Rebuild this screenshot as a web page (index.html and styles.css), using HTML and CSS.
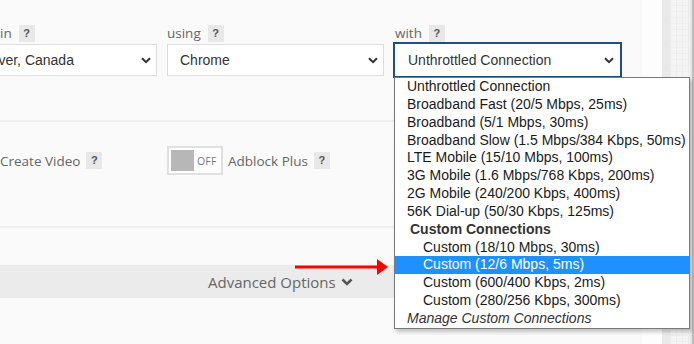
FILE: index.html
```html
<!DOCTYPE html>
<html>
<head>
<meta charset="utf-8">
<link rel="stylesheet" href="styles.css">
</head>
<body>
<div class="page">
  <div class="panel">
    <section class="sec sec-top">
      <div class="field">
        <div class="label label-first">in <span class="q">?</span></div>
        <div class="select"><span>Vancouver, Canada</span><svg class="chev" width="10" height="7" viewBox="0 0 10 7"><path d="M1 1.2 L5 5.2 L9 1.2" fill="none" stroke="#333" stroke-width="2"/></svg></div>
      </div>
      <div class="field">
        <div class="label">using <span class="q">?</span></div>
        <div class="select"><span>Chrome</span><svg class="chev" width="10" height="7" viewBox="0 0 10 7"><path d="M1 1.2 L5 5.2 L9 1.2" fill="none" stroke="#333" stroke-width="2"/></svg></div>
      </div>
      <div class="field">
        <div class="label">with <span class="q">?</span></div>
        <div class="select focused"><span>Unthrottled Connection</span><svg class="chev" width="10" height="7" viewBox="0 0 10 7"><path d="M1 1.2 L5 5.2 L9 1.2" fill="none" stroke="#333" stroke-width="2"/></svg></div>
      </div>
    </section>
    <section class="sec sec-mid">
      <div class="opt">
        <div class="toggle"><span class="knob"></span><span class="off">OFF</span></div>
        <span class="opt-label">Create Video</span><span class="q">?</span>
      </div>
      <div class="opt">
        <div class="toggle"><span class="knob"></span><span class="off">OFF</span></div>
        <span class="opt-label">Adblock Plus</span><span class="q">?</span>
      </div>
    </section>
    <section class="sec sec-bottom">
      <div class="adv">Advanced Options <svg class="adv-chev" width="12" height="8" viewBox="0 0 12 8"><path d="M1.5 1.5 L6 6 L10.5 1.5" fill="none" stroke="#555" stroke-width="2.6"/></svg></div>
    </section>
  </div>
  <div class="strip">
    <div class="s-white"></div>
    <div class="s-gray"></div>
    <div class="s-tiles"></div>
    <div class="s-light"></div>
    <div class="s-dark"></div>
  </div>

  <ul class="dropdown">
    <li>Unthrottled Connection</li>
    <li>Broadband Fast (20/5 Mbps, 25ms)</li>
    <li>Broadband (5/1 Mbps, 30ms)</li>
    <li>Broadband Slow (1.5 Mbps/384 Kbps, 50ms)</li>
    <li>LTE Mobile (15/10 Mbps, 100ms)</li>
    <li>3G Mobile (1.6 Mbps/768 Kbps, 200ms)</li>
    <li>2G Mobile (240/200 Kbps, 400ms)</li>
    <li>56K Dial-up (50/30 Kbps, 125ms)</li>
    <li class="group">Custom Connections</li>
    <li class="sub">Custom (18/10 Mbps, 30ms)</li>
    <li class="sub hl">Custom (12/6 Mbps, 5ms)</li>
    <li class="sub">Custom (600/400 Kbps, 2ms)</li>
    <li class="sub">Custom (280/256 Kbps, 300ms)</li>
    <li class="manage">Manage Custom Connections</li>
  </ul>

  <svg class="arrow" width="94" height="16" viewBox="0 0 94 16">
    <rect x="0" y="6.5" width="84" height="3" fill="#ff0000"/>
    <path d="M82 0 L93 8 L82 16 Z" fill="#ff0000"/>
  </svg>
</div>
</body>
</html>
```

FILE: styles.css
```css
html, body {
  margin: 0;
  padding: 0;
  width: 694px;
  height: 344px;
  overflow: hidden;
  background: #fafafa;
}

.page {
  position: relative;
  display: flex;
  width: 694px;
  height: 344px;
}

.panel {
  flex: none;
  width: 703px;
  margin-left: -61px;
  background: #fafafa;
  display: flex;
  flex-direction: column;
  font-family: "Open Sans", "Liberation Sans", sans-serif;
  color: #666;
}

.sec-top {
  height: 122px;
  box-sizing: border-box;
  padding-top: 24px;
  display: grid;
  grid-template-columns: 218px 217px 226px;
  grid-template-rows: max-content;
  column-gap: 10px;
  border-bottom: 2px solid #efefef;
}

.sec-top .field:nth-child(3) {
  margin-left: 1px;
}

.label {
  height: 18px;
  display: flex;
  align-items: center;
  font-size: 13.5px;
  line-height: 18px;
  margin-bottom: 2px;
  color: #666;
}

.label-first {
  padding-left: 61px;
}

.q {
  display: inline-flex;
  align-items: center;
  justify-content: center;
  width: 16px;
  height: 17px;
  margin-left: 7px;
  background: #e8e8e8;
  color: #555;
  font-family: "Liberation Sans", Arial, sans-serif;
  font-weight: bold;
  font-size: 11px;
  line-height: 17px;
}

.select {
  height: 32px;
  box-sizing: border-box;
  border: 1px solid #dcdcdc;
  background: #fff;
  display: flex;
  align-items: center;
  justify-content: space-between;
  padding: 0 5px 0 12px;
  font-family: "Liberation Sans", Arial, sans-serif;
  font-size: 14px;
  color: #333;
  white-space: nowrap;
}

.select.focused {
  border-color: #fff;
  outline: 2px solid #1f4f7b;
  outline-offset: 0;
}

.chev {
  flex: none;
  display: block;
  margin-top: 1px;
}

.sec-mid {
  height: 106px;
  box-sizing: border-box;
  padding-top: 24px;
  display: flex;
  border-bottom: 2px solid #efefef;
}

.opt {
  width: 228px;
  display: flex;
  align-items: center;
  height: 29px;
  font-size: 13.5px;
  color: #666;
}

.toggle {
  flex: none;
  width: 56px;
  height: 29px;
  box-sizing: border-box;
  border: 2px solid #e0e0e0;
  background: #fff;
  padding: 2px;
  display: flex;
  align-items: center;
  margin-right: 5px;
}

.knob {
  width: 23px;
  height: 21px;
  background: #b7b7b7;
}

.off {
  font-size: 10.5px;
  color: #777;
  margin-left: 3px;
  letter-spacing: 0.2px;
}

.opt-label {
  white-space: nowrap;
}

.opt .q {
  margin-left: 6px;
}

.sec-bottom {
  flex: 1;
  padding-top: 37px;
}

.adv {
  height: 33px;
  background: #ebebeb;
  display: flex;
  align-items: center;
  padding-left: 269px;
  font-size: 15px;
  color: #666;
}

.adv-chev {
  margin-left: 5px;
  margin-top: 1px;
}

.strip {
  flex: none;
  width: 52px;
  display: flex;
}

.s-white {
  width: 20px;
  background: #fdfdfd;
}

.s-gray {
  width: 8px;
  background: #e9e9e9;
}

.s-tiles {
  width: 20px;
  background-color: #f4f4f4;
  background-image:
    linear-gradient(90deg, rgba(236,236,236,0.9) 1px, transparent 1px),
    linear-gradient(0deg, rgba(236,236,236,0.9) 1px, transparent 1px);
  background-size: 6px 6px;
}

.s-light {
  width: 2px;
  background: #e6e6e6;
}

.s-dark {
  width: 2px;
  background: #bdbdbd;
}

.dropdown {
  position: absolute;
  left: 394px;
  top: 77px;
  width: 296px;
  height: 252px;
  box-sizing: border-box;
  margin: 0;
  padding: 0;
  list-style: none;
  background: #fff;
  border: 1px solid #7a7a7a;
  box-shadow: 2px 3px 4px rgba(0, 0, 0, 0.22);
  font-family: "Liberation Sans", Arial, sans-serif;
  font-size: 14px;
  color: #1a1a1a;
}

.dropdown li {
  height: 17.857px;
  line-height: 17.857px;
  padding-left: 12px;
  white-space: nowrap;
}

.dropdown li.group {
  font-weight: bold;
  color: #333;
  padding-left: 15px;
}

.dropdown li.sub {
  padding-left: 28px;
}

.dropdown li.hl {
  background: #1e90ff;
  color: #fff;
}

.dropdown li.manage {
  font-style: italic;
  color: #333;
}

.arrow {
  position: absolute;
  left: 295px;
  top: 259px;
}
```
